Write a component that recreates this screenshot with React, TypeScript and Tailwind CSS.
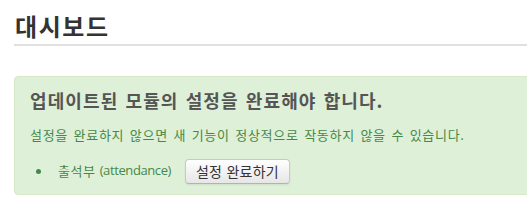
export default function App() {
  return (
    <main className="w-[527px] h-[200px] overflow-hidden bg-white font-['Noto_Sans_CJK_KR',sans-serif] text-[13px] text-[#333]">
      <div className="w-[620px] pl-[14px]">
        {/* Page title */}
        <h1 className="mt-[11px] pb-[3px] border-b-2 border-[#e0e0e0] text-[24px] leading-[30px] font-bold text-[#333] pl-px tracking-[1.6px]">
          대시보드
        </h1>

        {/* Update notice */}
        <div className="mt-[30px] rounded-[4px] border border-[#d6e9c6] bg-[#dff0d8] pl-[15px] pt-[11px] pb-[10px] text-[#468847]">
          <h4 className="text-[18px] leading-[24px] font-bold text-[#555] tracking-[1.1px] [word-spacing:2px]">
            업데이트된 모듈의 설정을 완료해야 합니다.
          </h4>
          <p className="mt-[13px] leading-[20px] tracking-[0.7px] [word-spacing:2px]">
            설정을 완료하지 않으면 새 기능이 정상적으로 작동하지 않을 수 있습니다.
          </p>
          <ul className="mt-[13px]">
            <li className="flex items-center h-[26px]">
              <span className="ml-[6px] mr-[17px] w-[5px] h-[5px] rounded-full bg-[#468847]" />
              <span className="tracking-[0.6px]">출석부</span>
              <span className="ml-[4px] font-['Open_Sans','Noto_Sans_CJK_KR',sans-serif] text-[13px] tracking-[-0.4px]">(attendance)</span>
              <button className="ml-[14px] h-[25px] px-[10px] rounded-[4px] border border-[#c8c8c8] border-b-[#b3b3b3] bg-gradient-to-b from-white to-[#e6e6e6] text-[14px] leading-[20px] text-[#333] tracking-[0.2px] [word-spacing:1px] shadow-[0_1px_2px_rgba(0,0,0,0.08)]">
                설정 완료하기
              </button>
            </li>
          </ul>
        </div>
      </div>
    </main>
  );
}
